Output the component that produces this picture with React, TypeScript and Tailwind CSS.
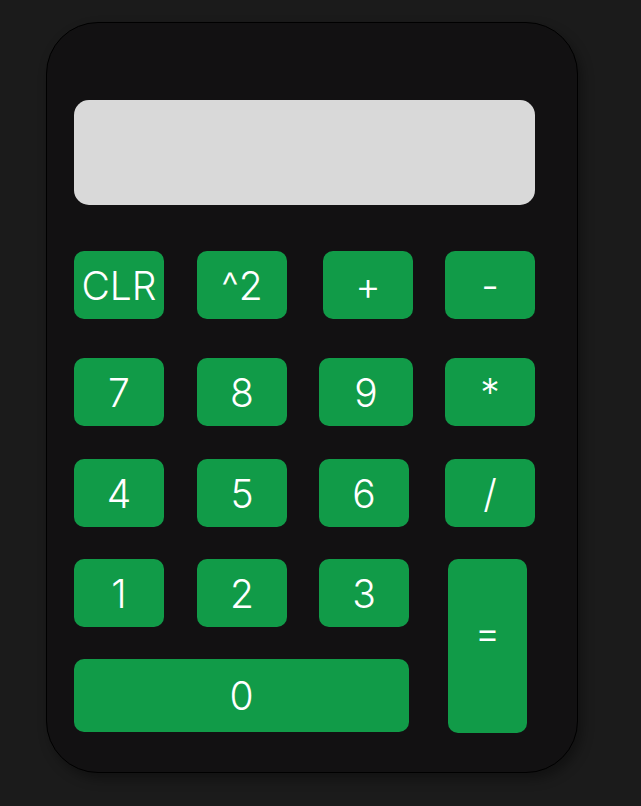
import React from "react"

const font = { fontFamily: "Inter, 'Noto Sans', sans-serif" }

function Key({ label, className = "" }: { label: string; className?: string }) {
  return (
    <button
      className={`flex items-center justify-center rounded-[10px] bg-[#119b48] text-white text-[39px] font-light leading-none ${className}`}
    >
      {label}
    </button>
  )
}

export default function App() {
  return (
    <div className="h-[806px] w-full bg-[#1b1b1b] pt-[22px] pl-[46px]" style={font}>
      <div className="w-[532px] h-[751px] rounded-[52px] border border-black bg-[#121112] px-[27px] pt-[77px] shadow-[4px_6px_12px_rgba(0,0,0,0.35)]">
        {/* Display */}
        <div className="h-[105px] w-[461px] rounded-[15px] bg-[#d9d9d9]" />

        {/* Row 1 */}
        <div className="mt-[46px] flex">
          <Key label="CLR" className="w-[90px] h-[68px]" />
          <Key label="^2" className="ml-[33px] w-[90px] h-[68px]" />
          <Key label="+" className="ml-[36px] w-[90px] h-[68px]" />
          <Key label="-" className="ml-[32px] w-[90px] h-[68px]" />
        </div>

        {/* Row 2 */}
        <div className="mt-[39px] flex">
          <Key label="7" className="w-[90px] h-[68px]" />
          <Key label="8" className="ml-[33px] w-[90px] h-[68px]" />
          <Key label="9" className="ml-[32px] w-[94px] h-[68px] rounded-[3px] rounded-tr-[10px] rounded-br-[10px]" />
          <Key label="*" className="ml-[32px] w-[90px] h-[68px]" />
        </div>

        {/* Row 3 */}
        <div className="mt-[33px] flex">
          <Key label="4" className="w-[90px] h-[68px]" />
          <Key label="5" className="ml-[33px] w-[90px] h-[68px]" />
          <Key label="6" className="ml-[32px] w-[90px] h-[68px]" />
          <Key label="/" className="ml-[36px] w-[90px] h-[68px]" />
        </div>

        {/* Row 4 + 0 + equals */}
        <div className="mt-[32px] flex">
          <div className="flex flex-col">
            <div className="flex">
              <Key label="1" className="w-[90px] h-[68px]" />
              <Key label="2" className="ml-[33px] w-[90px] h-[68px]" />
              <Key label="3" className="ml-[32px] w-[90px] h-[68px]" />
            </div>
            <Key label="0" className="mt-[32px] w-[335px] h-[73px]" />
          </div>
          <Key label="=" className="ml-[39px] w-[79px] h-[174px] pb-[28px]" />
        </div>
      </div>
    </div>
  )
}
